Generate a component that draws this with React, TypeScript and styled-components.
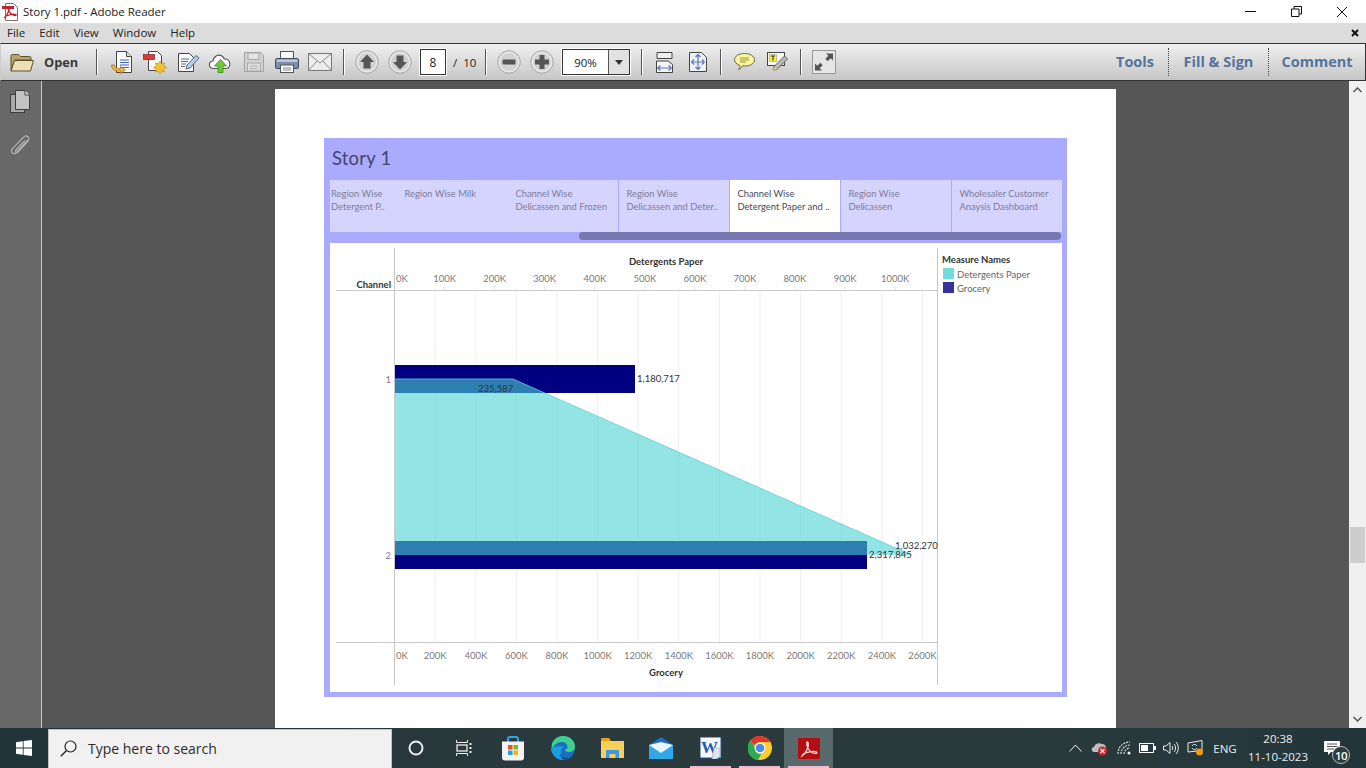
import React from "react";
import styled, { createGlobalStyle } from "styled-components";

const Global = createGlobalStyle`
  html, body { margin: 0; padding: 0; background: #fff; }
  #root { width: 1366px; height: 768px; overflow: hidden; }
  * { box-sizing: border-box; }
`;

const Shell = styled.div`
  width: 1366px; height: 768px; display: flex; flex-direction: column; overflow: hidden;
  font-family: "Open Sans", "Liberation Sans", sans-serif;
`;

/* ---------- window chrome ---------- */
const TitleBar = styled.div`
  height: 23px; background: #fff; display: flex; align-items: center; padding-left: 2px; flex: none;
`;
const TitleText = styled.span`
  font-size: 11.5px; color: #222; margin-left: 5px; letter-spacing: -0.05px; white-space: nowrap;
`;
const WinControls = styled.div`
  margin-left: auto; display: flex; height: 23px; padding-right: 1px;
`;
const WinBtn = styled.div`
  width: 46px; height: 23px; display: flex; align-items: center; justify-content: center;
  svg { display: block; }
`;
const MenuBar = styled.div`
  height: 20px; background: #dcdcdc; display: flex; align-items: center; gap: 14px; padding: 0 7px 0 7px; flex: none;
`;
const MenuItem = styled.span`
  font-size: 11.5px; color: #222; line-height: 20px;
`;
const MenuClose = styled.div`
  margin-left: auto; display: flex; padding-right: 0;
`;
const Toolbar = styled.div`
  height: 38px; flex: none; display: flex; align-items: center;
  border: 1px solid #333; border-left-color: #ccc;
  background: linear-gradient(#f0f0f0, #c6c6c6);
`;
const OpenBtn = styled.div`
  width: 95px; display: flex; align-items: center; padding-left: 9px; gap: 10px;
  font-size: 12.8px; font-weight: 700; color: #3a3a3a;
`;
const Sep = styled.div`
  width: 1px; height: 26px; background: #555; box-shadow: 1px 0 0 #fff; flex: none;
`;
const Group = styled.div<{ $l: number; $r: number }>`
  display: flex; align-items: center; padding: 0 ${p => p.$r}px 0 ${p => p.$l}px; flex: none;
`;
const Slot = styled.div<{ $w?: number }>`
  width: ${p => p.$w ?? 33}px; height: 28px; display: flex; align-items: center; justify-content: center; flex: none;
  svg { display: block; }
`;
const PageBox = styled.div`
  width: 26px; height: 26px; background: #fff; border: 1px solid #333; outline: 1px solid #fff;
  margin-left: 4px; display: flex; align-items: center; justify-content: center;
  font-size: 12px; color: #222;
`;
const PageTotal = styled.span`
  font-size: 11.5px; color: #222; margin-left: 7px; width: 32px; white-space: nowrap; word-spacing: 3px;
`;
const ZoomBox = styled.div`
  width: 68px; height: 26px; display: flex; background: #fff; border: 1px solid #333; outline: 1px solid #fff; margin-left: 4px;
`;
const ZoomValue = styled.div`
  width: 45px; display: flex; align-items: center; justify-content: center; font-size: 11.5px; color: #222;
`;
const ZoomArrow = styled.div`
  flex: 1; background: #e2e2e2; border-left: 1px solid #555; display: flex; align-items: center; justify-content: center;
`;
const RightTabs = styled.div`
  margin-left: auto; display: flex; align-items: center; height: 28px;
`;
const RightTab = styled.div<{ $line?: boolean; $w: number }>`
  width: ${p => p.$w}px; height: 28px; display: flex; align-items: center; justify-content: center; padding-bottom: 1px;
  font-size: 14.5px; font-weight: 700; color: #56739c; white-space: nowrap;
  border-left: ${p => (p.$line ? "1px dotted #444" : "none")};
`;

/* ---------- main area ---------- */
const Main = styled.div`
  flex: 1; min-height: 0; display: flex; overflow: hidden;
`;
const SidePanel = styled.div`
  width: 42px; flex: none; background: #686868; border-right: 1px solid #c8c8c8;
  display: flex; flex-direction: column; align-items: center; padding: 9px 2px 0 0; gap: 20px;
`;
const Viewer = styled.div`
  flex: 1; background: #565656; display: flex; justify-content: center; padding-top: 8px; overflow: hidden;
`;
const Page = styled.div`
  width: 841px; height: 700px; background: #fff; padding: 49px 0 0 49px; flex: none;
`;
const Story = styled.div`
  width: 743px; height: 559px; background: #aaaaff; padding: 0 5px 5px 6px; display: flex; flex-direction: column;
  font-family: Lato, "Open Sans", sans-serif;
`;
const StoryTitle = styled.div`
  height: 42px; flex: none; font-size: 18.5px; color: #45456a; padding: 0 0 2px 2px; display: flex; align-items: center; letter-spacing: 0.2px;
`;
const Tabs = styled.div`
  height: 52px; flex: none; display: flex;
`;
const Tab = styled.div<{ $w: number; $active?: boolean; $line?: boolean; $tight?: boolean }>`
  width: ${p => p.$w}px; height: 52px; flex: none; padding: 7px 0 0 ${p => (p.$tight ? 1 : 7.4)}px;
  background: ${p => (p.$active ? "#fff" : "#d4d4ff")};
  color: ${p => (p.$active ? "#4a4a5a" : "#7d7d96")};
  border-right: ${p => (p.$line ? "1px solid #aaaaff" : "none")};
  font-size: 9.4px; line-height: 13px; white-space: pre-line;
`;
const TabScroll = styled.div`
  height: 11px; flex: none;
`;
const TabThumb = styled.div`
  width: 482px; height: 8px; margin-left: 249px; background: #7878b0; border-radius: 4px;
`;
const ChartPanel = styled.div`
  height: 449px; flex: none; background: #fff; display: flex;
`;
const ChartSvg = styled.svg`
  display: block; flex: none;
`;
const Legend = styled.div`
  flex: 1; padding: 11px 0 0 4px;
`;
const LegendTitle = styled.div`
  font-size: 9.5px; font-weight: 700; color: #333; line-height: 12px; margin-bottom: 2px;
`;
const LegendRow = styled.div`
  height: 14px; display: flex; align-items: flex-start; padding-left: 1px;
  font-size: 9.5px; color: #666; line-height: 13px;
`;
const Swatch = styled.div<{ $c: string }>`
  width: 11px; height: 11px; background: ${p => p.$c}; margin-right: 3px; flex: none;
`;
const Tick = styled.text`
  font-size: 9.5px; fill: #7a7a7a; font-family: Lato, "Open Sans", sans-serif;
`;
const AxisTitle = styled.text`
  font-size: 9.5px; font-weight: 700; fill: #333; font-family: Lato, "Open Sans", sans-serif;
`;
const ValueLabel = styled.text`
  font-size: 9.5px; fill: #333; font-family: Lato, "Open Sans", sans-serif;
`;
const ChannelLabel = styled.text`
  font-size: 9.5px; fill: #96708a; font-family: Lato, "Open Sans", sans-serif;
`;
const ScrollBar = styled.div`
  width: 17px; flex: none; background: #f0f0f0; display: flex; flex-direction: column; align-items: center;
  justify-content: space-between; padding: 6px 0; position: relative;
`;
const ScrollThumb = styled.div`
  position: absolute; left: 1px; top: 446px; width: 15px; height: 36px; background: #cdcdcd;
`;

/* ---------- taskbar ---------- */
const Taskbar = styled.div`
  height: 40px; flex: none; background: linear-gradient(90deg, #1f3338, #2b3a3d 45%, #2a3a3c 75%, #22363a);
  display: flex; align-items: stretch; color: #fff;
`;
const StartBtn = styled.div`
  width: 48px; display: flex; align-items: center; justify-content: center; flex: none;
`;
const SearchBox = styled.div`
  width: 344px; flex: none; background: #f1f1f1; border: 1px solid #c4c4c4; border-bottom: none; margin-top: 1px;
  display: flex; align-items: center; padding: 0 0 2px 11px; gap: 11px;
  font-size: 14px; color: #2b2b2b;
`;
const TaskSlot = styled.div<{ $w: number; $on?: boolean; $pin?: boolean }>`
  width: ${p => p.$w}px; flex: none; display: flex; align-items: center; justify-content: center; position: relative;
  background: ${p => (p.$on ? "#586a6b" : "transparent")};
  svg { display: block; }
  &::after {
    content: ""; position: absolute; left: 4px; right: 4px; bottom: 0; height: 2px;
    background: ${p => (p.$pin ? "#f5b8d2" : "transparent")};
  }
`;
const Tray = styled.div`
  margin-left: auto; display: flex; align-items: stretch; padding-right: 15px;
`;
const Lang = styled.div`
  width: 36px; display: flex; align-items: center; justify-content: center; font-size: 11.5px; color: #eee;
`;
const Clock = styled.div`
  width: 70px; display: flex; flex-direction: column; align-items: center; justify-content: center;
  font-size: 11.5px; line-height: 18px; color: #eee;
`;
const NotifBadge = styled.span`
  position: absolute; left: 19px; top: 18px; width: 18px; height: 18px; border-radius: 50%;
  background: #2b3a3d; border: 1px solid #bbb; font-size: 11.5px; font-weight: 600; color: #fff;
  display: flex; align-items: center; justify-content: center; letter-spacing: -0.5px;
`;

/* ---------- icons ---------- */
const AcroMark = ({ stroke = "#fff", w = 1.6 }: { stroke?: string; w?: number }) => (
  <path d="M4 18c3-2 5-6 6-9 .6-2 .4-5-.6-5-1.200 0-.8 4 1 7 1.500 2.500 3.500 4 6.500 4.400 1.800.2 2.600-.8 1.600-1.400-1.800-1-7-.4-11 .9-1.500.5-3 2-3.500 3.100z" fill="none" stroke={stroke} strokeWidth={w} />
);
const PdfSmall = () => (
  <svg width="16" height="18" viewBox="0 0 16 18">
    <path d="M3.500.5h8l4 4v13h-12z" fill="#fff" stroke="#8a6a6a" />
    <rect x="0" y="3" width="12" height="3" fill="#c3242a" />
    <path d="M2 15c3-2 4-5 5-8 .5-2 .2-3-.4-3-.8 0-.4 3 1 5 1.200 2 3 3.300 5.500 3.500 1.300 0 1.600-.8.500-1-2-.5-6 0-9 1.500" fill="none" stroke="#c3242a" strokeWidth="1.300" />
  </svg>
);
const Folder = () => (
  <svg width="24" height="19" viewBox="0 0 24 19">
    <path d="M1 17.500V3q0-1.500 1.500-1.500h6l2 2h9q1.500 0 1.500 1.500v2H5z" fill="#b9a56e" stroke="#5d5130" />
    <path d="M1 18l3.500-10.500h19L20.500 18z" fill="#ecdfb3" stroke="#5d5130" strokeLinejoin="round" />
  </svg>
);
const Doc = ({ children }: { children?: React.ReactNode }) => (
  <>
    <path d="M6.500 1.500h10l5 5v16h-15z" fill="#fafafa" stroke="#444" />
    <path d="M16.500 1.500v5h5" fill="#ddd" stroke="#444" />
    {children}
  </>
);
const CombineIcon = () => (
  <svg width="24" height="24" viewBox="0 0 24 24">
    <Doc>
      <path d="M10 10h9M10 12.500h9M10 15h9M10 17.500h9" stroke="#3d63c4" />
    </Doc>
    <path d="M1.500 15c0 5 5 6.500 9 6l-.2 2.500 5-3.500-5-3.500v2.200c-3 .6-5.500-1-5.800-3.700z" fill="#f2b84a" stroke="#a26f16" strokeWidth=".8" />
  </svg>
);
const SignIcon = () => (
  <svg width="24" height="24" viewBox="0 0 24 24">
    <path d="M5.500 1.500h9l4 4v15h-13z" fill="#fafafa" stroke="#444" />
    <rect x="0.500" y="4.500" width="11" height="5" fill="#e23a3a" stroke="#8d1f1f" strokeWidth=".7" />
    <path d="M17 11l1.600 2.800 3-.9-.9 3 2.800 1.600-2.800 1.600.9 3-3-.9L17 24l-1.600-2.800-3 .9.9-3L10.500 17.500l2.800-1.600-.9-3 3 .9z" fill="#f2c230" stroke="#b78b16" strokeWidth=".6" />
  </svg>
);
const EditIcon = () => (
  <svg width="24" height="24" viewBox="0 0 24 24">
    <path d="M2.500 3.500h11l4 4v14h-15z" fill="#fafafa" stroke="#444" />
    <path d="M5 9h8M5 11.500h7M5 14h5M5 16.500h4" stroke="#666" />
    <path d="M10 19l1-4L20 5.500l3 2.500-9 10z" fill="#b7cdea" stroke="#43587f" strokeWidth=".9" />
  </svg>
);
const CloudIcon = () => (
  <svg width="25" height="24" viewBox="0 0 25 24">
    <path d="M6 18.500c-6 0-6-7-1-7.500C5.500 6 11 3.500 14.500 6.500c1 1 1.500 1.500 1.800 2.500 6-1 8 9 1.700 9.500z" fill="#fafafa" stroke="#555" strokeWidth="1.100" />
    <path d="M12.500 9.500l6 6.500h-3.500v6.500h-5V16H6.500z" fill="#6cc73a" stroke="#3a8a22" strokeWidth=".8" />
  </svg>
);
const SaveIcon = () => (
  <svg width="22" height="22" viewBox="0 0 22 22">
    <path d="M1.500 1.500h16l3 3v16h-19z" fill="#d2d2d2" stroke="#a2a2a2" />
    <rect x="5" y="2" width="11" height="6.500" fill="#e3e3e3" stroke="#a8a8a8" />
    <rect x="4.500" y="12" width="13" height="8" fill="#ddd" stroke="#a8a8a8" />
    <path d="M7 15h8M7 17.500h8" stroke="#b5b5b5" />
  </svg>
);
const PrintIcon = () => (
  <svg width="24" height="24" viewBox="0 0 24 24">
    <rect x="5.500" y="1.500" width="13" height="8" fill="#fafafa" stroke="#555" />
    <path d="M2 8.500h20q1.500 0 1.500 1.500v7q0 1.500-1.500 1.500H2Q.5 18.500.5 17v-7q0-1.500 1.500-1.500z" fill="#7e8ea8" stroke="#3f4c66" />
    <rect x="1.500" y="9.500" width="21" height="2.500" fill="#bcc6d6" />
    <rect x="5.500" y="15" width="13" height="7.500" fill="#fafafa" stroke="#555" />
    <path d="M8 18h8M8 20h8" stroke="#888" />
  </svg>
);
const MailIcon = () => (
  <svg width="24" height="18" viewBox="0 0 24 18">
    <rect x=".5" y=".5" width="23" height="17" fill="#ededed" stroke="#777" />
    <path d="M.5.5L12 10 23.500.5M.5 17.500l8.500-9.500M23.500 17.500L15 8" fill="none" stroke="#8a8a8a" />
  </svg>
);
const RoundBtn = ({ children }: { children: React.ReactNode }) => (
  <svg width="24" height="24" viewBox="0 0 24 24">
    <circle cx="12" cy="12" r="11.300" fill="#dedede" stroke="#a8a8a8" />
    <circle cx="12" cy="12" r="9.500" fill="#d2d2d2" stroke="#eee" />
    {children}
  </svg>
);
const FitWidth = () => (
  <svg width="17" height="21" viewBox="0 0 17 21">
    <path d="M1 .5h15v6H1z" fill="#eee" stroke="#444" />
    <path d="M.5 9h11.500l4.500 3.500V20.500H.5z" fill="#f4f4f4" stroke="#444" />
    <path d="M1.500 16h14M1.500 16l3-2.500M1.500 16l3 2.500M15.500 16l-3-2.500M15.500 16l-3 2.500" fill="none" stroke="#5a78b8" strokeWidth="1.200" />
  </svg>
);
const FitPage = () => (
  <svg width="18" height="20" viewBox="0 0 18 20">
    <path d="M.5.5h12l5 5v14H.5z" fill="#eef0f5" stroke="#444" />
    <path d="M9 2.500v15M9 2.500L6.500 5M9 2.500L11.500 5M9 17.500L6.500 15M9 17.500L11.500 15M2.500 10h13M2.500 10L5 7.500M2.500 10L5 12.500M15.500 10L13 7.500M15.500 10L13 12.500" fill="none" stroke="#5a78b8" strokeWidth="1.200" />
  </svg>
);
const CommentIcon = () => (
  <svg width="21" height="20" viewBox="0 0 21 20">
    <path d="M10.500 1.500c5.500 0 10 2.600 10 6.300s-4.500 6.200-9 6.200c-1 0-2 0-3-.2-.6 1.600-2 2.800-4 3.700 1-1.400 1.400-2.800 1.300-4.200C2.800 12.300.5 10.300.5 7.800c0-3.700 4.500-6.300 10-6.300z" fill="#fbf3a0" stroke="#6a6a4a" />
    <path d="M6 6h9M6 8h9M6 10h6" stroke="#a09a3a" />
  </svg>
);
const StickyIcon = () => (
  <svg width="21" height="21" viewBox="0 0 21 21">
    <rect x=".5" y=".5" width="17" height="13" fill="#fafafa" stroke="#444" />
    <rect x="2.500" y="2.500" width="7" height="7" fill="#ffee33" stroke="#888" strokeWidth=".5" />
    <path d="M4 4h4M6 4v4.500" stroke="#333" strokeWidth="1.100" />
    <path d="M6 18l1-3.500L17.500 4 20.500 7 10 17.500z" fill="#b8b8b8" stroke="#555" strokeWidth=".9" />
    <path d="M6 18l1-3.500 3 3z" fill="#e7d24a" />
  </svg>
);
const ExpandIcon = () => (
  <svg width="24" height="24" viewBox="0 0 24 24">
    <rect x=".5" y=".5" width="23" height="23" fill="#e6e6e6" stroke="#9a9a9a" strokeWidth="1" />
    <path d="M14 3.500h7v7l-2.300-2.300-3 3-2.400-2.400 3-3z" fill="#555" />
    <path d="M10 20.500H3v-7l2.300 2.300 3-3 2.400 2.400-3 3z" fill="#555" />
  </svg>
);
const PagesIcon = () => (
  <svg width="20" height="24" viewBox="0 0 20 24">
    <rect x=".5" y="4.500" width="14" height="18" fill="#a8a8a8" stroke="#3e3e3e" />
    <path d="M5.500.5h9.500l4.500 4.500v14.500h-14z" fill="#c2c2c2" stroke="#3e3e3e" />
    <path d="M15 .5v4.500h4.500" fill="#e6e6e6" stroke="#3e3e3e" />
  </svg>
);
const ClipIcon = () => (
  <svg width="22" height="24" viewBox="0 0 22 24">
    <path d="M19 6L7.500 18.500c-1.500 1.600-3.800 1.200-4.500.2-.9-1.300-.6-2.700.5-4L14.500 3.200c1.400-1.400 3.300-1.500 4.500-.5 1.200 1 1.300 2.800 0 4.300L9 18c-.8.800-1.800.7-2.300.2-.5-.6-.4-1.400.3-2.200L16 6.500" fill="none" stroke="#b4b4b4" strokeWidth="1.200" />
  </svg>
);

/* taskbar glyphs */
const WinLogo = () => (
  <svg width="16" height="16" viewBox="0 0 16 16">
    <path d="M0 2.200l6.800-1v6.300H0zM7.600 1.100L16 0v7.500H7.600zM0 8.400h6.800v6.400l-6.800-1zM7.600 8.400H16V16l-8.400-1.100z" fill="#fff" />
  </svg>
);
const SearchGlyph = () => (
  <svg width="17" height="17" viewBox="0 0 17 17">
    <circle cx="10.500" cy="6.500" r="5.500" fill="none" stroke="#222" strokeWidth="1.200" />
    <path d="M6.500 10.500L.8 16.200" stroke="#222" strokeWidth="1.300" />
  </svg>
);
const CortanaGlyph = () => (
  <svg width="16" height="16" viewBox="0 0 16 16">
    <circle cx="8" cy="8" r="6.500" fill="none" stroke="#eee" strokeWidth="2" />
  </svg>
);
const TaskViewGlyph = () => (
  <svg width="17" height="16" viewBox="0 0 17 16">
    <path d="M.5 0v2.500h11V0M.5 16v-2.500h11V16" fill="none" stroke="#eee" />
    <rect x="1" y="5" width="10" height="6" fill="none" stroke="#eee" strokeWidth="1.300" />
    <path d="M14.500 3v2M14.500 7v2M14.500 11v2" stroke="#eee" strokeWidth="2" />
  </svg>
);
const StoreGlyph = () => (
  <svg width="24" height="25" viewBox="0 0 24 25">
    <path d="M7 6V3q0-2 2-2h6q2 0 2 2v3" fill="none" stroke="#2aa7e0" strokeWidth="2" />
    <path d="M1 5.500h22v16q0 3-3 3H4q-3 0-3-3z" fill="#f3f3f3" />
    <rect x="7" y="9" width="4.500" height="4.500" fill="#e8502a" />
    <rect x="12.500" y="9" width="4.500" height="4.500" fill="#7db91f" />
    <rect x="7" y="14.500" width="4.500" height="4.500" fill="#1fa3e8" />
    <rect x="12.500" y="14.500" width="4.500" height="4.500" fill="#f7b600" />
  </svg>
);
const EdgeGlyph = () => (
  <svg width="24" height="24" viewBox="0 0 24 24">
    <circle cx="12" cy="12" r="12" fill="#1a6fc0" />
    <path d="M1 8C3 2 8 0 12 0c7 0 12 5 12 10 0 4-3 6-6 6-3 0-4-1-4-2.500 2 0 2.500-1 2.500-2.500C16.500 8 14 6 11 6 6 6 3 9 1 13z" fill="#3ed08f" />
    <path d="M0 12C.5 19 6 24 12 24c3 0 5-1 6.500-2-4 1-8-1-8.500-5-.3-3 1-5 3-6-5-1.500-10 0-13 1z" fill="#1b9de2" />
    <path d="M14 24c-3-.5-5-3-4.500-7 .5 3 3 5 8.500 5-1 1-2.500 1.800-4 2z" fill="#0c4a8f" />
  </svg>
);
const ExplorerGlyph = () => (
  <svg width="23" height="20" viewBox="0 0 23 20">
    <path d="M0 1q0-1 1-1h7l2 3h13v3H0z" fill="#e4a520" />
    <rect x="0" y="3" width="23" height="17" fill="#f8cf5b" />
    <path d="M5 12h13v8h-3.500v-4h-6v4H5z" fill="#3e9ae0" />
  </svg>
);
const MailGlyph = () => (
  <svg width="24" height="22" viewBox="0 0 24 22">
    <path d="M0 8L12 0l12 8v14H0z" fill="#1a6fc0" />
    <path d="M0 8h24v14H0z" fill="#2fa8ea" />
    <path d="M0 8l12 8 12-8-12-3z" fill="#e9f6fd" />
  </svg>
);
const WordText = styled.text`
  font-family: "Liberation Serif", serif; font-size: 17px; font-weight: 700; fill: #1f5bb0;
`;
const WordGlyph = () => (
  <svg width="22" height="22" viewBox="0 0 22 22">
    <rect x="0" y="0" width="21" height="21" fill="#f4f7fc" stroke="#1f4f9a" />
    <WordText x="1" y="16">W</WordText>
    <path d="M14 11h6v8l-3 3h-5z" fill="#dfe5ee" stroke="#9aa8c0" strokeWidth=".6" />
  </svg>
);
const ChromeGlyph = () => (
  <svg width="24" height="24" viewBox="0 0 24 24">
    <circle cx="12" cy="12" r="12" fill="#ffce2e" />
    <path d="M12 0a12 12 0 0 1 10.400 6H12a6 6 0 0 0-5.700 4L2.500 4.300A12 12 0 0 1 12 0z" fill="#e0352b" />
    <path d="M2.500 4.300L7 12a5 5 0 0 0 6.500 5.500L10 24A12 12 0 0 1 2.500 4.300z" fill="#2da94f" />
    <circle cx="12" cy="12" r="5.500" fill="#fff" />
    <circle cx="12" cy="12" r="4.300" fill="#4a8af0" />
  </svg>
);
const AdobeGlyph = () => (
  <svg width="22" height="21" viewBox="0 0 22 21">
    <rect width="22" height="21" rx="1" fill="#b50e12" />
    <AcroMark stroke="#f5dada" w={1.300} />
  </svg>
);
const CloudTray = () => (
  <svg width="17" height="16" viewBox="0 0 17 16">
    <path d="M3 12c-3 0-3-5 0-5 .5-3 5-5 8-3 3 0 4 2 4 4H9v4z" fill="#bdbdbd" />
    <circle cx="11.500" cy="11" r="4.500" fill="#d8212d" />
    <path d="M9.500 9l4 4M13.500 9l-4 4" stroke="#fff" strokeWidth="1.200" />
  </svg>
);
const WifiTray = () => (
  <svg width="15" height="14" viewBox="0 0 15 14">
    <path d="M1 13C1 6 6 1 13 1M4 13c0-5 4-9 9-9M7 13c0-3 3-6 6-6" fill="none" stroke="#ddd" strokeDasharray="2 1" strokeWidth="1.200" />
    <circle cx="12" cy="12" r="1.500" fill="#fff" />
  </svg>
);
const BatteryTray = () => (
  <svg width="17" height="10" viewBox="0 0 17 10">
    <rect x=".5" y=".5" width="14" height="9" fill="none" stroke="#fff" />
    <rect x="2" y="2" width="7" height="6" fill="#fff" />
    <rect x="15" y="3" width="2" height="4" fill="#fff" />
  </svg>
);
const SpeakerTray = () => (
  <svg width="17" height="14" viewBox="0 0 17 14">
    <path d="M.5 5v4h2.500L7 12.500v-11L3 5z" fill="none" stroke="#eee" />
    <path d="M9 5c1 1 1 3 0 4M11 3c2 2 2 6 0 8M13 1c3 3 3 9 0 12" fill="none" stroke="#eee" />
  </svg>
);
const MeetTray = () => (
  <svg width="17" height="16" viewBox="0 0 17 16">
    <path d="M1 3l14-2.500v10L1 12z" fill="none" stroke="#eee" />
    <path d="M5 6c1-2 4-2 5 0M10 8c-1 2-4 2-5 0" fill="none" stroke="#eee" />
    <circle cx="12.500" cy="12" r="3.500" fill="#f39a12" />
  </svg>
);
const CaretTray = () => (
  <svg width="13" height="8" viewBox="0 0 13 8">
    <path d="M.5 7.500l6-6.500 6 6.500" fill="none" stroke="#eee" />
  </svg>
);
const NotifIcon = () => (
  <svg width="17" height="14" viewBox="0 0 17 14">
    <path d="M0 0h16v11H7l-3 3v-3H0z" fill="#fff" />
    <path d="M3 3h10M3 5.500h10M3 8h7" stroke="#555" />
  </svg>
);

/* ---------- chart data ---------- */
const bottomTicks = ["0K", "200K", "400K", "600K", "800K", "1000K", "1200K", "1400K", "1600K", "1800K", "2000K", "2200K", "2400K", "2600K"];
const topTicks = ["100K", "200K", "300K", "400K", "500K", "600K", "700K", "800K", "900K", "1000K"];
const x0 = 394.6;
const stepBottom = 40.6;
const stepTop = 50.05;

const Chart = () => (
  <ChartSvg width="608" height="449" viewBox="330 243 608 449">
    {bottomTicks.slice(1).map((_, i) => (
      <line key={i} x1={x0 + stepBottom * (i + 1)} x2={x0 + stepBottom * (i + 1)} y1="290" y2="642" stroke="#efefef" />
    ))}
    {topTicks.map((_, i) => (
      <line key={i} x1={x0 + stepTop * (i + 1)} x2={x0 + stepTop * (i + 1)} y1="286" y2="290" stroke="#e2e2e2" />
    ))}
    <rect x="395" y="365" width="240" height="28" fill="#000080" />
    <rect x="395" y="541" width="472" height="28" fill="#000080" />
    <polygon points="395,379 513,379 911.500,555 395,555" fill="rgb(75,212,212)" fillOpacity="0.6" />
    <path d="M395 379H513L911.500 555" fill="none" stroke="#5fcfd4" strokeOpacity="0.8" />
    <line x1="394.500" x2="394.500" y1="248" y2="685" stroke="#c8c8c8" />
    <line x1="937.500" x2="937.500" y1="248" y2="685" stroke="#c8c8c8" />
    <line x1="336" x2="937" y1="290.500" y2="290.500" stroke="#c8c8c8" />
    <line x1="336" x2="937" y1="642.500" y2="642.500" stroke="#c8c8c8" />

    <AxisTitle x="666" y="265" textAnchor="middle">Detergents Paper</AxisTitle>
    <Tick x="396" y="282">0K</Tick>
    {topTicks.map((t, i) => (
      <Tick key={t} x={x0 + stepTop * (i + 1)} y="282" textAnchor="middle">{t}</Tick>
    ))}
    <AxisTitle x="391" y="288" textAnchor="end">Channel</AxisTitle>
    <ChannelLabel x="391" y="383" textAnchor="end">1</ChannelLabel>
    <ChannelLabel x="391" y="559" textAnchor="end">2</ChannelLabel>
    <ValueLabel x="637" y="382">1,180,717</ValueLabel>
    <ValueLabel x="478" y="392">235,587</ValueLabel>
    <ValueLabel x="895" y="549">1,032,270</ValueLabel>
    <ValueLabel x="869" y="558">2,317,845</ValueLabel>
    <Tick x="396" y="659">0K</Tick>
    {bottomTicks.slice(1).map((t, i) => (
      <Tick key={t} x={x0 + stepBottom * (i + 1)} y="659" textAnchor="middle">{t}</Tick>
    ))}
    <AxisTitle x="666" y="676" textAnchor="middle">Grocery</AxisTitle>
  </ChartSvg>
);

const tabs = [
  { w: 67, t: "Region Wise\nDetergent P..", tight: true },
  { w: 111, t: "Region Wise Milk" },
  { w: 111, t: "Channel Wise\nDelicassen and Frozen", line: true },
  { w: 111, t: "Region Wise\nDelicassen and Deter..", line: true },
  { w: 111, t: "Channel Wise\nDetergent Paper and ..", line: true, active: true },
  { w: 111, t: "Region Wise\nDelicassen", line: true },
  { w: 110, t: "Wholesaler Customer\nAnaysis Dashboard" },
];

export default function App() {
  return (
    <Shell>
      <Global />
      <TitleBar>
        <PdfSmall />
        <TitleText>Story 1.pdf - Adobe Reader</TitleText>
        <WinControls>
          <WinBtn>
            <svg width="11" height="11" viewBox="0 0 11 11"><path d="M0 5.500h11" stroke="#111" /></svg>
          </WinBtn>
          <WinBtn>
            <svg width="11" height="11" viewBox="0 0 11 11"><path d="M.5 3h7.500v7.500H.5zM3 3V.5h7.500V8H8" fill="none" stroke="#111" /></svg>
          </WinBtn>
          <WinBtn>
            <svg width="12" height="12" viewBox="0 0 12 12"><path d="M1 1l10 10M11 1L1 11" stroke="#111" /></svg>
          </WinBtn>
        </WinControls>
      </TitleBar>
      <MenuBar>
        {["File", "Edit", "View", "Window", "Help"].map(m => <MenuItem key={m}>{m}</MenuItem>)}
        <MenuClose>
          <svg width="8" height="8" viewBox="0 0 8 8"><path d="M1 1l6 6M7 1L1 7" stroke="#111" strokeWidth="2" /></svg>
        </MenuClose>
      </MenuBar>
      <Toolbar>
        <OpenBtn><Folder />Open</OpenBtn>
        <Sep />
        <Group $l={8} $r={7}>
          <Slot><CombineIcon /></Slot>
          <Slot><SignIcon /></Slot>
          <Slot><EditIcon /></Slot>
          <Slot><CloudIcon /></Slot>
          <Slot><SaveIcon /></Slot>
          <Slot><PrintIcon /></Slot>
          <Slot><MailIcon /></Slot>
        </Group>
        <Sep />
        <Group $l={6} $r={0}>
          <Slot>
            <RoundBtn><path d="M12 4.500l7 7.500h-3.500v6.500h-7V12H5z" fill="#555" /></RoundBtn>
          </Slot>
          <Slot>
            <RoundBtn><path d="M12 19.500L5 12h3.500V5.500h7V12H19z" fill="#555" /></RoundBtn>
          </Slot>
          <PageBox>8</PageBox>
          <PageTotal>/ 10</PageTotal>
        </Group>
        <Sep />
        <Group $l={6} $r={11}>
          <Slot><RoundBtn><rect x="5.500" y="9.500" width="13" height="5" rx="1" fill="#555" /></RoundBtn></Slot>
          <Slot><RoundBtn><path d="M9.500 5h5v4.500H19v5h-4.500V19h-5v-4.500H5v-5h4.500z" fill="#555" /></RoundBtn></Slot>
          <ZoomBox>
            <ZoomValue>90%</ZoomValue>
            <ZoomArrow>
              <svg width="8" height="5" viewBox="0 0 8 5"><path d="M0 0h8L4 5z" fill="#333" /></svg>
            </ZoomArrow>
          </ZoomBox>
        </Group>
        <Sep />
        <Group $l={0} $r={11}>
          <Slot $w={44}><FitWidth /></Slot>
          <Slot $w={23}><FitPage /></Slot>
        </Group>
        <Sep />
        <Group $l={0} $r={12}>
          <Slot $w={46}><CommentIcon /></Slot>
          <Slot $w={21}><StickyIcon /></Slot>
        </Group>
        <Sep />
        <Group $l={11} $r={0}>
          <Slot $w={24}><ExpandIcon /></Slot>
        </Group>
        <RightTabs>
          <RightTab $w={66}>Tools</RightTab>
          <RightTab $w={100} $line>Fill &amp; Sign</RightTab>
          <RightTab $w={97} $line>Comment</RightTab>
        </RightTabs>
      </Toolbar>
      <Main>
        <SidePanel>
          <PagesIcon />
          <ClipIcon />
        </SidePanel>
        <Viewer>
          <Page>
            <Story>
              <StoryTitle>Story 1</StoryTitle>
              <Tabs>
                {tabs.map(t => (
                  <Tab key={t.t} $w={t.w} $active={t.active} $line={t.line} $tight={t.tight}>{t.t}</Tab>
                ))}
              </Tabs>
              <TabScroll><TabThumb /></TabScroll>
              <ChartPanel>
                <Chart />
                <Legend>
                  <LegendTitle>Measure Names</LegendTitle>
                  <LegendRow><Swatch $c="#72dcdc" />Detergents Paper</LegendRow>
                  <LegendRow><Swatch $c="#33339a" />Grocery</LegendRow>
                </Legend>
              </ChartPanel>
            </Story>
          </Page>
        </Viewer>
        <ScrollBar>
          <svg width="9" height="6" viewBox="0 0 9 6"><path d="M.5 5L4.500 1l4 4" fill="none" stroke="#555" strokeWidth="1.500" /></svg>
          <ScrollThumb />
          <svg width="9" height="6" viewBox="0 0 9 6"><path d="M.5 1l4 4 4-4" fill="none" stroke="#555" strokeWidth="1.500" /></svg>
        </ScrollBar>
      </Main>
      <Taskbar>
        <StartBtn><WinLogo /></StartBtn>
        <SearchBox><SearchGlyph />Type here to search</SearchBox>
        <TaskSlot $w={48}><CortanaGlyph /></TaskSlot>
        <TaskSlot $w={48}><TaskViewGlyph /></TaskSlot>
        <TaskSlot $w={50}><StoreGlyph /></TaskSlot>
        <TaskSlot $w={50}><EdgeGlyph /></TaskSlot>
        <TaskSlot $w={48}><ExplorerGlyph /></TaskSlot>
        <TaskSlot $w={50}><MailGlyph /></TaskSlot>
        <TaskSlot $w={49} $pin><WordGlyph /></TaskSlot>
        <TaskSlot $w={49} $pin><ChromeGlyph /></TaskSlot>
        <TaskSlot $w={49} $on $pin><AdobeGlyph /></TaskSlot>
        <Tray>
          <TaskSlot $w={24}><CaretTray /></TaskSlot>
          <TaskSlot $w={25}><CloudTray /></TaskSlot>
          <TaskSlot $w={24}><WifiTray /></TaskSlot>
          <TaskSlot $w={23}><BatteryTray /></TaskSlot>
          <TaskSlot $w={24}><SpeakerTray /></TaskSlot>
          <TaskSlot $w={24}><MeetTray /></TaskSlot>
          <Lang>ENG</Lang>
          <Clock><span>20:38</span><span>11-10-2023</span></Clock>
          <TaskSlot $w={38}>
            <NotifIcon />
            <NotifBadge>10</NotifBadge>
          </TaskSlot>
        </Tray>
      </Taskbar>
    </Shell>
  );
}
